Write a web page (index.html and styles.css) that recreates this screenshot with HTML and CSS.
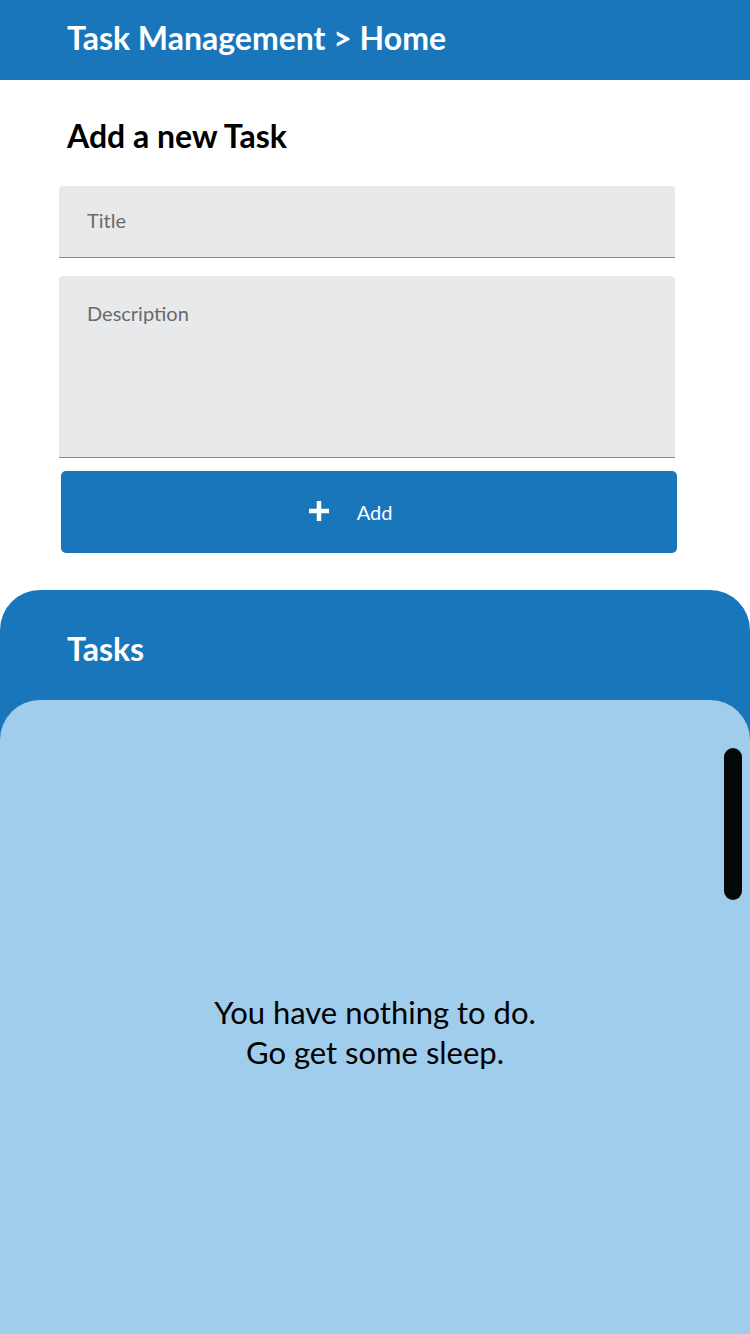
FILE: index.html
```html
<!DOCTYPE html>
<html lang="en">
<head>
<meta charset="utf-8">
<title>Task Management</title>
<link rel="stylesheet" href="styles.css">
</head>
<body>
<header class="topbar">
  <h1 class="topbar-title">Task Management &gt; Home</h1>
</header>
<main class="form-section">
  <h2 class="form-heading">Add a new Task</h2>
  <div class="field field-title"><span class="placeholder">Title</span></div>
  <div class="field field-desc"><span class="placeholder">Description</span></div>
  <button class="add-btn" type="button">
    <svg class="plus" width="22" height="22" viewBox="0 0 22 22"><path d="M11 1v20M1 11h20" stroke="#fff" stroke-width="4.5" fill="none"/></svg>
    <span class="add-label">Add</span>
  </button>
</main>
<section class="tasks">
  <h2 class="tasks-title">Tasks</h2>
  <div class="tasks-body">
    <div class="scrollbar"></div>
    <p class="empty">You have nothing to do.<br>Go get some sleep.</p>
  </div>
</section>
</body>
</html>
```
FILE: styles.css
```css
* { box-sizing: border-box; }
html, body { margin: 0; padding: 0; }
body {
  width: 750px;
  height: 1334px;
  overflow: hidden;
  font-family: Lato, "Open Sans", sans-serif;
  background: #fff;
  display: flex;
  flex-direction: column;
}
.topbar {
  height: 80px;
  background: #1976bb;
  display: flex;
  align-items: center;
  padding-left: 67px;
  flex-shrink: 0;
}
.topbar-title {
  margin: 0;
  color: #fff;
  font-size: 32px;
  font-weight: 700;
  line-height: 1;
  position: relative;
  top: -2px;
}
.form-section {
  padding: 37px 0 0 59px;
  display: flex;
  flex-direction: column;
  flex-shrink: 0;
}
.form-heading {
  margin: 0 0 31px 8px;
  font-size: 32px;
  font-weight: 700;
  line-height: 38px;
  color: #000;
}
.field {
  width: 616px;
  background: #e8e9eb;
  border-radius: 4px 4px 0 0;
  border-bottom: 1px solid #8a8a8a;
  padding-left: 28px;
}
.placeholder {
  font-size: 20px;
  color: #6a6a6a;
  line-height: 1;
}
.field-title {
  height: 72px;
  display: flex;
  align-items: center;
  padding-bottom: 4px;
}
.field-desc {
  height: 182px;
  margin-top: 18px;
  padding-top: 27px;
}
.add-btn {
  margin: 13px 0 0 2px;
  width: 616px;
  height: 82px;
  border: none;
  border-radius: 5px;
  background: #1976bb;
  display: flex;
  align-items: center;
  justify-content: center;
  gap: 27px;
  padding: 0 38px 0 0;
  font-family: inherit;
}
.plus { display: block; margin-top: -2px; }
.add-label {
  color: #fff;
  font-size: 20px;
  line-height: 1;
}
.tasks {
  margin-top: 37px;
  flex: 1;
  background: #1976bb;
  border-radius: 40px 40px 0 0;
  display: flex;
  flex-direction: column;
}
.tasks-title {
  margin: 0;
  height: 110px;
  padding: 41px 0 0 67px;
  color: #fff;
  font-size: 32px;
  font-weight: 700;
  line-height: 36px;
}
.tasks-body {
  flex: 1;
  background: #a1cdec;
  border-radius: 40px 40px 0 0;
  position: relative;
  display: flex;
  align-items: center;
  justify-content: center;
}
.scrollbar {
  position: absolute;
  top: 48px;
  right: 8px;
  width: 18px;
  height: 152px;
  border-radius: 9px;
  background: #050808;
}
.empty {
  margin: 0;
  text-align: center;
  font-size: 31px;
  line-height: 40px;
  color: #000;
  position: relative;
  top: 15px;
}
```
